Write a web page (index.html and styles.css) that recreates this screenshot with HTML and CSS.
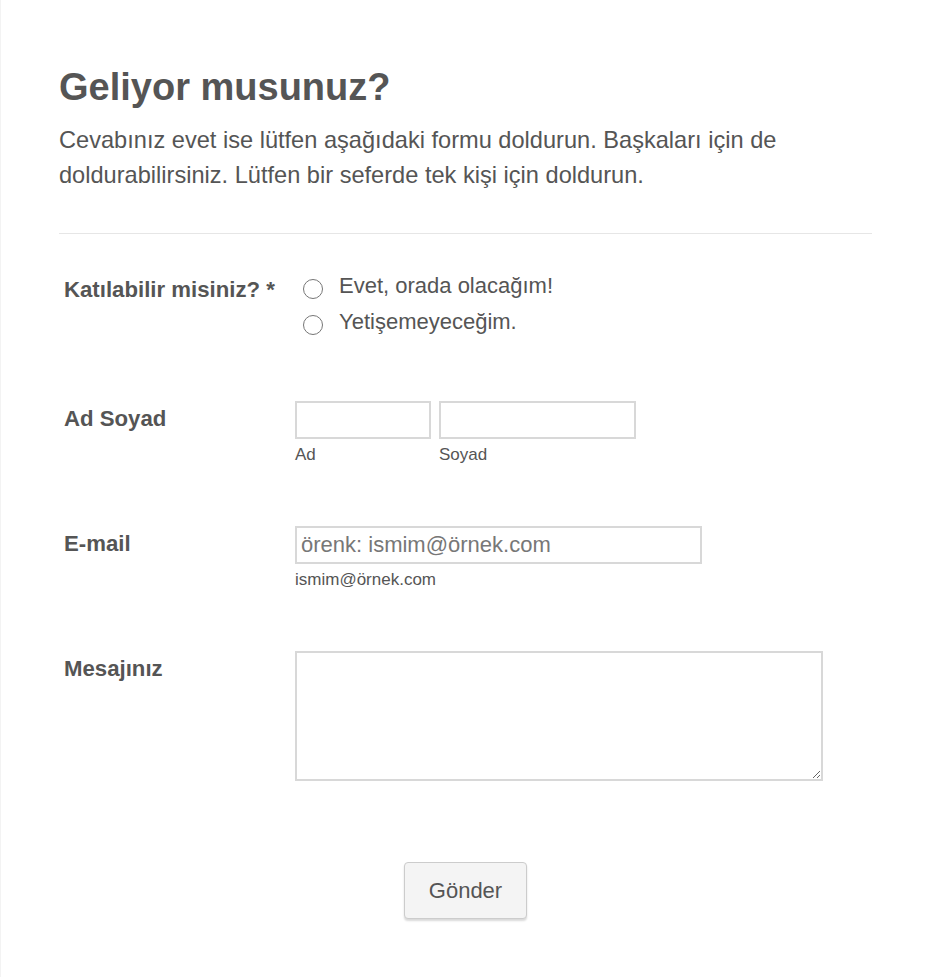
FILE: index.html
```html
<!DOCTYPE html>
<html lang="tr">
<head>
    <meta charset="UTF-8">
    <meta name="viewport" content="width=device-width, initial-scale=1.0">
    <title>Geliyor musunuz?</title>
    <link rel="stylesheet" href="styles.css">
</head>
<body>
    <div class="form-all">
        <div class="form-header">
            <h1>Geliyor musunuz?</h1>
            <p>Cevabınız evet ise lütfen aşağıdaki formu doldurun. Başkaları için de doldurabilirsiniz. Lütfen bir seferde tek kişi için doldurun.</p>
        </div>

        <div class="form-line line-radio">
            <label class="form-label">Katılabilir misiniz? *</label>
            <div class="form-input">
                <label class="radio-item"><input type="radio" name="katilim"><span>Evet, orada olacağım!</span></label>
                <label class="radio-item"><input type="radio" name="katilim"><span>Yetişemeyeceğim.</span></label>
            </div>
        </div>

        <div class="form-line">
            <label class="form-label">Ad Soyad</label>
            <div class="form-input name-fields">
                <div class="sub-field">
                    <input type="text" class="input-first">
                    <span class="sub-label">Ad</span>
                </div>
                <div class="sub-field">
                    <input type="text" class="input-last">
                    <span class="sub-label">Soyad</span>
                </div>
            </div>
        </div>

        <div class="form-line">
            <label class="form-label">E-mail</label>
            <div class="form-input">
                <div class="sub-field">
                    <input type="email" class="input-email" placeholder="örenk: ismim@örnek.com">
                    <span class="sub-label">ismim@örnek.com</span>
                </div>
            </div>
        </div>

        <div class="form-line">
            <label class="form-label">Mesajınız</label>
            <div class="form-input">
                <textarea class="input-message"></textarea>
            </div>
        </div>

        <div class="form-buttons">
            <button class="btn-submit">Gönder</button>
        </div>
    </div>
</body>
</html>
```

FILE: styles.css
```css
body {
    font-family: 'Liberation Sans', Arial, sans-serif;
    color: #555555;
    margin: 0;
    background: #ffffff;
}

.form-all {
    border-left: 1px solid #f3f3f3;
    min-height: 977px;
    box-sizing: border-box;
    padding: 64px 58px 0 58px;
}

.form-header {
    border-bottom: 1px solid #e6e6e6;
    padding-bottom: 40px;
    margin-bottom: 34px;
}

h1 {
    font-size: 38px;
    font-weight: bold;
    margin: 0 0 13px 0;
    line-height: 46px;
}

.form-header p {
    font-size: 23.6px;
    line-height: 35px;
    margin: 0;
}

.form-line {
    display: flex;
    padding: 0 5px;
    margin-bottom: 61px;
}

.form-label {
    width: 231px;
    flex-shrink: 0;
    font-size: 22.2px;
    line-height: 25px;
    font-weight: bold;
    padding-top: 5px;
}

.line-radio .form-label {
    padding-top: 9px;
}

.radio-item {
    display: flex;
    align-items: center;
    font-size: 22px;
    height: 36px;
    margin-left: 7px;
}

.radio-item input {
    margin: 5px 16px 0 1px;
    width: 20px;
    height: 20px;
}

.name-fields {
    display: flex;
    gap: 8px;
}

.sub-field {
    display: flex;
    flex-direction: column;
}

input[type="text"], input[type="email"], textarea {
    border: 2px solid #d8d8d8;
    height: 38px;
    box-sizing: border-box;
    font-family: 'Liberation Sans', Arial, sans-serif;
    font-size: 22px;
    padding: 4px;
    margin: 0;
}

.input-first {
    width: 136px;
}

.input-last {
    width: 197px;
}

.input-email {
    width: 407px;
}

.input-email::placeholder {
    color: #777777;
}

.sub-label {
    font-size: 17px;
    line-height: 20px;
    margin-top: 6px;
}

textarea.input-message {
    display: block;
    width: 528px;
    height: 130px;
    resize: both;
}

.form-buttons {
    text-align: center;
    padding-top: 20px;
}

.btn-submit {
    background-color: #f4f4f4;
    color: #555555;
    border: 1px solid #cccccc;
    border-radius: 4px;
    box-shadow: 0 2px 2px rgba(0, 0, 0, 0.15);
    font-family: 'Liberation Sans', Arial, sans-serif;
    font-size: 22px;
    width: 123px;
    height: 57px;
    cursor: pointer;
}
```
